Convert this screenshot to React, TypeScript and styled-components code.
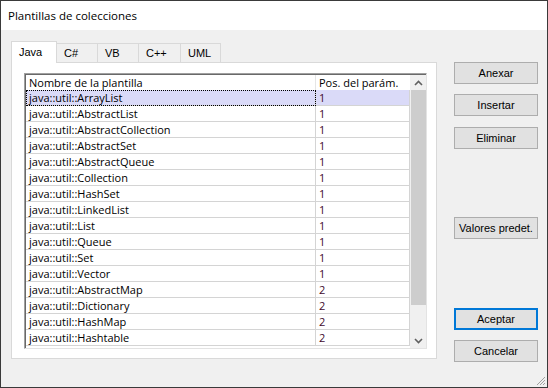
import { Fragment } from 'react';
import styled, { createGlobalStyle, css } from 'styled-components';

const GlobalStyle = createGlobalStyle`
    html, body { margin: 0; padding: 0; background: #ffffff; }
    * { box-sizing: border-box; }
`;

const uiFont = `"Open Sans", "Noto Sans", sans-serif`;
const classicFont = `"Liberation Sans", Arial, sans-serif`;

const Window = styled.div`
    position: relative;
    width: 548px;
    height: 388px;
    border: 1px solid #3a3a3a;
    background: #f0f0f0;
    display: flex;
    flex-direction: column;
    font-family: ${uiFont};
`;

const TitleBar = styled.div`
    height: 29px;
    background: #ffffff;
    padding-left: 7px;
    display: flex;
    align-items: center;
    font-size: 11.5px;
    color: #000;
    flex-shrink: 0;
`;

const Body = styled.div`
    flex: 1;
    display: flex;
    padding: 11px 0 0 10px;
    gap: 17px;
`;

const TabControl = styled.div`
    width: 426px;
    display: flex;
    flex-direction: column;
`;

const TabStrip = styled.div`
    height: 21px;
    display: flex;
    align-items: flex-end;
    position: relative;
    z-index: 1;
`;

const Tab = styled.div<{ $active?: boolean; $w: number }>`
    width: ${p => p.$w}px;
    height: 19px;
    border: 1px solid #d9d9d9;
    border-bottom: none;
    border-left: none;
    background: #f0f0f0;
    font-family: ${classicFont};
    font-size: 11px;
    color: #000;
    padding-left: 7px;
    line-height: 18px;
    ${p => p.$active && css`
        height: 22px;
        margin-bottom: -1px;
        border-left: 1px solid #d9d9d9;
        background: #ffffff;
        padding-left: 7px;
        line-height: 20px;
    `}
`;

const TabPanel = styled.div`
    width: 426px;
    height: 297px;
    background: #ffffff;
    border: 1px solid #d9d9d9;
    padding: 10px 9px 9px 12px;
`;

const ListBox = styled.div`
    width: 403px;
    height: 276px;
    border-top: 1px solid #a0a0a0;
    border-left: 1px solid #a0a0a0;
    border-right: 1px solid #e3e3e3;
    border-bottom: 1px solid #e3e3e3;
    box-shadow: inset 1px 1px 0 #696969;
    display: flex;
    overflow: hidden;
    padding: 1px 0 0 1px;
`;

const Grid = styled.div`
    flex: 1;
    display: grid;
    grid-template-columns: 290px 94px;
    grid-auto-rows: 16px;
    grid-template-rows: 15px;
    align-content: start;
    font-size: 11px;
`;

const HeadCell = styled.div<{ $last?: boolean }>`
    padding-left: 3px;
    line-height: 15px;
    color: #000;
    white-space: nowrap;
    border-right: ${p => (p.$last ? 'none' : '1px solid #e5e5e5')};
`;

const Cell = styled.div<{ $num?: boolean; $sel?: boolean; $focus?: boolean }>`
    padding-left: 3px;
    line-height: 15px;
    white-space: nowrap;
    border-bottom: 1px solid #d4d4d4;
    border-right: 1px solid #d4d4d4;
    color: ${p => (p.$num ? '#420a2c' : '#000')};
    background: ${p => (p.$sel ? '#dadaf8' : '#ffffff')};
    ${p => p.$focus && css`
        outline: 1px dotted #000;
        outline-offset: -1px;
    `}
`;

const ScrollBar = styled.div`
    width: 17px;
    background: #f0f0f0;
    display: flex;
    flex-direction: column;
    align-items: center;
`;

const ScrollArrow = styled.div`
    height: 15px;
    width: 17px;
    display: flex;
    align-items: center;
    justify-content: center;
    flex-shrink: 0;
`;

const Thumb = styled.div`
    width: 15px;
    height: 215px;
    background: #cdcdcd;
    flex-shrink: 0;
`;

const Track = styled.div`
    flex: 1;
`;

const ButtonColumn = styled.div`
    width: 84px;
    display: flex;
    flex-direction: column;
    padding-top: 21px;
`;

const Button = styled.div<{ $default?: boolean; $gap: number }>`
    height: 22px;
    margin-top: ${p => p.$gap}px;
    background: #e1e1e1;
    border: 1px solid #adadad;
    font-family: ${classicFont};
    font-size: 11px;
    color: #000;
    display: flex;
    align-items: center;
    justify-content: center;
    ${p => p.$default && css`
        border: 2px solid #0078d7;
    `}
`;

const Grip = styled.svg`
    position: absolute;
    right: 1px;
    bottom: 1px;
`;

const rows: [string, string][] = [
    ['java::util::ArrayList', '1'],
    ['java::util::AbstractList', '1'],
    ['java::util::AbstractCollection', '1'],
    ['java::util::AbstractSet', '1'],
    ['java::util::AbstractQueue', '1'],
    ['java::util::Collection', '1'],
    ['java::util::HashSet', '1'],
    ['java::util::LinkedList', '1'],
    ['java::util::List', '1'],
    ['java::util::Queue', '1'],
    ['java::util::Set', '1'],
    ['java::util::Vector', '1'],
    ['java::util::AbstractMap', '2'],
    ['java::util::Dictionary', '2'],
    ['java::util::HashMap', '2'],
    ['java::util::Hashtable', '2'],
];

const tabs: [string, number][] = [
    ['Java', 46],
    ['C#', 41],
    ['VB', 41],
    ['C++', 42],
    ['UML', 40],
];

function Chevron({ up }: { up?: boolean }) {
    return (
        <svg width="9" height="6" viewBox="0 0 9 6">
            <path
                d={up ? 'M1 5 L4.5 1.5 L8 5' : 'M1 1 L4.5 4.5 L8 1'}
                fill="none"
                stroke="#606060"
                strokeWidth="1.6"
            />
        </svg>
    );
}

export default function App() {
    return (
        <>
            <GlobalStyle />
            <Window>
                <TitleBar>Plantillas de colecciones</TitleBar>
                <Body>
                    <TabControl>
                        <TabStrip>
                            {tabs.map(([name, w], i) => (
                                <Tab key={name} $w={w} $active={i === 0}>{name}</Tab>
                            ))}
                        </TabStrip>
                        <TabPanel>
                            <ListBox>
                                <Grid>
                                    <HeadCell>Nombre de la plantilla</HeadCell>
                                    <HeadCell $last>Pos. del parám.</HeadCell>
                                    {rows.map(([name, pos], i) => (
                                        <Fragment key={name}>
                                            <Cell $sel={i === 0} $focus={i === 0}>{name}</Cell>
                                            <Cell $num $sel={i === 0}>{pos}</Cell>
                                        </Fragment>
                                    ))}
                                </Grid>
                                <ScrollBar>
                                    <ScrollArrow><Chevron up /></ScrollArrow>
                                    <Thumb />
                                    <Track />
                                    <ScrollArrow><Chevron /></ScrollArrow>
                                </ScrollBar>
                            </ListBox>
                        </TabPanel>
                    </TabControl>
                    <ButtonColumn>
                        <Button $gap={0}>Anexar</Button>
                        <Button $gap={10}>Insertar</Button>
                        <Button $gap={11}>Eliminar</Button>
                        <Button $gap={68}>Valores predet.</Button>
                        <Button $gap={69} $default>Aceptar</Button>
                        <Button $gap={10}>Cancelar</Button>
                    </ButtonColumn>
                </Body>
                <Grip width="12" height="12" viewBox="0 0 12 12">
                    <path d="M11 3 L3 11 M11 6 L6 11 M11 9 L9 11" stroke="#a0a0a0" strokeWidth="1" />
                </Grip>
            </Window>
        </>
    );
}
